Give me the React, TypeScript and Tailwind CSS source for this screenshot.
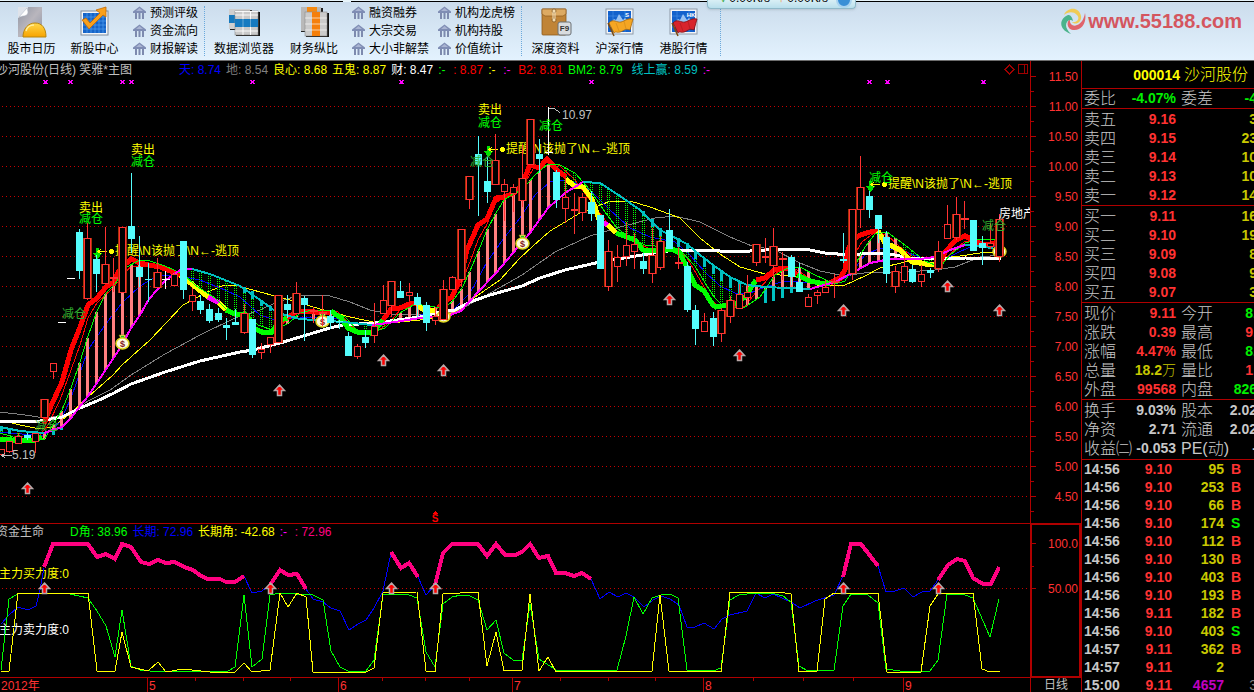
import type { ReactNode } from "react";

/* ---------- toolbar icons ---------- */

function CalendarIcon() {
  return (
    <svg viewBox="0 0 32 32" className="h-8 w-8">
      <defs>
        <linearGradient id="cal" x1="0" y1="0" x2="1" y2="1">
          <stop offset="0" stopColor="#8f95a3" />
          <stop offset="0.5" stopColor="#b9b6bd" />
          <stop offset="1" stopColor="#8b93a6" />
        </linearGradient>
        <linearGradient id="sun" x1="0" y1="0" x2="0" y2="1">
          <stop offset="0" stopColor="#ffd84a" />
          <stop offset="1" stopColor="#f7a300" />
        </linearGradient>
      </defs>
      <path d="M2 1h24v30H2z" fill="url(#cal)" />
      <path d="M2 1h10l-1 5c-1 3-3 4-5 4l-4 2z" fill="#dfe3ea" />
      <path d="M3 11L11 2l1 4c0 3-3 4-5 4z" fill="#ffffff" stroke="#aab2c0" strokeWidth="0.5" />
      <path d="M7 31c0-8 5-14 12-14s11 5 11 14z" fill="url(#sun)" stroke="#b8860f" />
      <path d="M10 25c1-4 4-6 8-6" fill="none" stroke="#ffef9e" strokeWidth="1.500" />
    </svg>
  );
}

function TrendIcon() {
  return (
    <svg viewBox="0 0 32 32" className="h-8 w-8">
      <rect x="2" y="5" width="27" height="24" fill="#f2f5f9" stroke="#7f8c9c" />
      <rect x="4" y="7" width="23" height="20" fill="#1564c8" />
      <path d="M8 7v20M12 7v20M16 7v20M20 7v20M24 7v20M4 11h23M4 15h23M4 19h23M4 23h23" stroke="#4f9df0" strokeWidth="0.7" />
      <path d="M3 14l4-2 4 5L21 7l-4-3 10-3 0 10-3-2-14 14z" fill="#f9a01b" stroke="#c26a05" strokeWidth="0.8" />
    </svg>
  );
}

function BrowserIcon() {
  return (
    <svg viewBox="0 0 32 32" className="h-8 w-8">
      <rect x="2" y="4" width="22" height="20" fill="#222" />
      <rect x="1" y="3" width="21" height="20" fill="#cfcfcf" />
      <rect x="1" y="9" width="21" height="8" fill="#1679bd" />
      <rect x="8" y="6" width="24" height="24" fill="#111" />
      <rect x="7" y="5" width="23" height="24" fill="#c9c9c9" stroke="#8a8a8a" strokeWidth="0.6" />
      <rect x="7" y="13" width="23" height="8" fill="#157ac0" />
      <path d="M15 13v8M22.500 13v8" stroke="#7fb6db" strokeWidth="0.8" />
      <path d="M15 5v8M22.500 5v8M15 21v8M22.500 21v8M7 9h23M7 25h23M7 5.500h23" stroke="#fff" strokeWidth="0.9" />
    </svg>
  );
}

function CompareIcon() {
  return (
    <svg viewBox="0 0 32 32" className="h-8 w-8">
      <rect x="3" y="2" width="22" height="24" fill="#222" />
      <rect x="3" y="1" width="20" height="24" fill="#b9b9b9" />
      <rect x="9" y="1" width="10" height="6" fill="#f58a12" />
      <rect x="8" y="7" width="23" height="24" fill="#111" />
      <rect x="7" y="6" width="22" height="24" fill="#cbcbcb" stroke="#8a8a8a" strokeWidth="0.6" />
      <rect x="14" y="6" width="8" height="24" fill="#f57f0b" />
      <path d="M7 12h22M7 18h22M7 24h22" stroke="#fff" strokeWidth="0.9" opacity="0.7" />
    </svg>
  );
}

function ArchiveIcon() {
  return (
    <svg viewBox="0 0 32 32" className="h-8 w-8">
      <rect x="2" y="3" width="24" height="26" rx="1" fill="#c08437" stroke="#8d5a1d" strokeWidth="0.8" />
      <path d="M2 3h24v5l-3 2H5L2 8z" fill="#ddaa62" stroke="#8d5a1d" strokeWidth="0.7" />
      <circle cx="14" cy="5" r="2" fill="#f4dcae" stroke="#7a4f19" strokeWidth="0.7" />
      <circle cx="14" cy="14" r="2" fill="#f4dcae" stroke="#7a4f19" strokeWidth="0.7" />
      <path d="M13 6v7M15 6v7" stroke="#f1e0bd" />
      <rect x="18" y="16" width="13" height="13" rx="2" fill="#d9dcdf" stroke="#6b7075" />
      <text x="24.500" y="25" fontSize="8" fontWeight="700" textAnchor="middle" fill="#333">F9</text>
    </svg>
  );
}

function MarketIcon({ flag, edge, tag }: { flag: string; edge: string; tag: string }) {
  return (
    <svg viewBox="0 0 32 32" className="h-8 w-8">
      <rect x="2" y="3" width="27" height="25" fill="#f2f5f9" stroke="#8d99a8" />
      <rect x="4" y="5" width="23" height="21" fill="#1261cc" />
      <path d="M4 10h23M4 21h23M9 5v21M21 5v21" stroke="#4c92e6" strokeWidth="0.6" />
      <path d="M6 18l4-5 2 1 3-6 4 6 2-2 5 5v4H6z" fill="#a9cdf5" opacity="0.9" />
      <text x="23" y="11" fontSize="6" fontWeight="700" textAnchor="middle" fill="#fff">{tag}</text>
      <path d="M5 17c4-5 8 0 12-1s6-4 12-3l-3 11c-5-2-6 1-10 2s-4-1-6 1z" fill={flag} stroke={edge} strokeWidth="0.8" />
      <path d="M12 17l3 8M20 15l2 8" stroke={edge} strokeWidth="0.600" opacity="0.5" />
      <path d="M4 17l6 13" stroke="#7b4a12" strokeWidth="1.500" />
    </svg>
  );
}

function BankIcon() {
  return (
    <svg viewBox="0 0 13 14" className="h-[14px] w-[13px] shrink-0">
      <path d="M6.500 0.500L13 5.500v1.500H0V5.500z" fill="#7f8db4" />
      <path d="M6.500 2L10 5H3z" fill="#a9b4d2" />
      <path d="M2 7h2v6H2zM5.500 7h2v6h-2zM9 7h2v6H9z" fill="#7d8aae" />
    </svg>
  );
}

/* ---------- toolbar ---------- */

function BigButton({ icon, label, wide }: { icon: ReactNode; label: string; wide?: boolean }) {
  return (
    <button className={`flex shrink-0 flex-col items-center pt-1 ${wide ? "w-[70px]" : "w-[63px]"}`}>
      {icon}
      <span className="mt-[3px] text-xs leading-4 whitespace-nowrap">{label}</span>
    </button>
  );
}

function LinkColumn({ items }: { items: string[] }) {
  return (
    <div className="flex shrink-0 flex-col pt-[2px]">
      {items.map((t) => (
        <button key={t} className="flex h-[18px] items-center gap-1 text-xs leading-[18px] whitespace-nowrap">
          <BankIcon />
          {t}
        </button>
      ))}
    </div>
  );
}

function Divider() {
  return <div className="my-1 w-px shrink-0 border-l border-dotted border-[#6aa9dc]" />;
}

function Logo() {
  return (
    <a href="#home" className="mt-[5px] mr-3 ml-auto flex h-7 shrink-0 items-center gap-[2px]">
      <svg viewBox="0 0 26 28" className="h-7 w-[26px]">
        <path d="M4 8C7 0 19-1 21 9c1 6-5 10-9 6 6 1 8-4 5-7C13 4 8 5 4 8z" fill="#f0cb55" />
        <path d="M25 6c2 9-3 18-12 17-6-1-7-8-3-11-1 5 3 8 7 6 4-1 7-6 8-12z" fill="#e0646c" />
        <path d="M8 8C0 11-3 22 11 27c-5-5-6-9-4-12 1-2 4-3 6-1-1-5-3-6-5-6z" fill="#4bb38c" />
      </svg>
      <span className="text-xl leading-7 font-bold text-[#d4565f]">www.55188.com</span>
    </a>
  );
}

function Toolbar() {
  return (
    <header className="relative border-b border-[#6d6d6d] bg-[#e6f3f9] text-black">
      <div className="flex h-[2px]">
        <div className="w-[343px] border-b border-black" />
        <div className="w-2" />
        <div className="flex-1 border-b border-black" />
      </div>
      <div className="flex h-[58px] bg-linear-to-b from-[#cbdcec] to-[#e3f2fe]">
        <BigButton icon={<CalendarIcon />} label="股市日历" />
        <BigButton icon={<TrendIcon />} label="新股中心" />
        <div className="w-[7px] shrink-0" />
        <LinkColumn items={["预测评级", "资金流向", "财报解读"]} />
        <div className="w-[6px] shrink-0" />
        <Divider />
        <div className="w-1 shrink-0" />
        <BigButton wide icon={<BrowserIcon />} label="数据浏览器" />
        <BigButton wide icon={<CompareIcon />} label="财务纵比" />
        <div className="w-[3px] shrink-0" />
        <LinkColumn items={["融资融券", "大宗交易", "大小非解禁"]} />
        <div className="w-[9px] shrink-0" />
        <LinkColumn items={["机构龙虎榜", "机构持股", "价值统计"]} />
        <div className="w-[6px] shrink-0" />
        <Divider />
        <div className="flex shrink-0 gap-px px-[2px]">
          <BigButton icon={<ArchiveIcon />} label="深度资料" />
          <BigButton icon={<MarketIcon flag="#f5a623" edge="#a8680c" tag="S" />} label="沪深行情" />
          <BigButton icon={<MarketIcon flag="#d8242c" edge="#7d0d12" tag="HK" />} label="港股行情" />
        </div>
        <div className="w-[3px] shrink-0" />
        <Divider />
        <Logo />
      </div>
      {/* network speed widget peeking in from the top edge */}
      <div className="absolute top-0 left-[707px] flex h-[9px] w-[149px] items-end gap-2 overflow-hidden rounded-b border border-t-0 border-[#8fb9c9] bg-linear-to-b from-[#d9eff5] to-[#b9dfec] pl-3 shadow">
        <span className="h-5 text-xs leading-5"><i className="text-[#1fa01f]">↓</i> 0.00K/s</span>
        <span className="h-5 text-xs leading-5"><i className="text-[#f07a10]">↑</i> 0.00K/s</span>
        <span className="h-4 w-4 rounded-full border-2 border-[#a9d3f0] bg-[#3a8fd6]" />
      </div>
    </header>
  );
}

/* ---------- price chart ---------- */

const RED = "#ff3232";
const CYAN = "#54fcfc";
const AXIS = "#b00000";
const GREEN = "#00ff00";
const YELLOW = "#ffff00";

// x of the n-th bar
const barX = (i: number) => Math.floor(1 + 8.684 * i) + 0.5;

type Kind = "r" | "c" | "w";

// [index, kind, body top, body bottom, high, low]
const CANDLES: [number, Kind, number, number, number, number][] = [
  [0, "r", 449, 454, 449, 454], [1, "r", 441, 451, 441, 453], [2, "r", 436, 443, 433, 443],
  [3, "c", 435, 438, 433, 440], [4, "r", 433, 441, 433, 453], [5, "r", 399, 417, 399, 417],
  [6, "r", 363, 371, 363, 379], [7, "w", 322, 323, 322, 322], [8, "w", 278, 279, 278, 278],
  [9, "c", 232, 271, 229, 279], [10, "r", 238, 298, 223, 300], [11, "c", 259, 274, 255, 292],
  [12, "r", 264, 283, 227, 283], [13, "r", 277, 279, 258, 292], [14, "r", 227, 292, 227, 292],
  [15, "c", 226, 239, 173, 253], [16, "c", 267, 277, 236, 287], [17, "c", 279, 280, 263, 302],
  [18, "r", 272, 287, 258, 287], [19, "w", 279, 280, 271, 289], [20, "r", 274, 285, 272, 285],
  [21, "c", 241, 290, 241, 299], [22, "r", 295, 301, 288, 311], [23, "c", 301, 310, 295, 314],
  [24, "c", 309, 321, 304, 323], [25, "c", 313, 320, 308, 322], [26, "c", 325, 328, 318, 340],
  [27, "c", 322, 325, 309, 325], [28, "r", 313, 332, 304, 334], [29, "c", 319, 355, 319, 358],
  [30, "r", 349, 352, 343, 359], [31, "r", 337, 344, 337, 353], [32, "r", 295, 342, 295, 342],
  [33, "c", 304, 310, 295, 318], [34, "r", 293, 313, 282, 313], [35, "c", 298, 305, 296, 341],
  [36, "r", 310, 312, 307, 323], [37, "r", 312, 314, 295, 326], [38, "c", 316, 323, 310, 329],
  [39, "c", 321, 322, 320, 329], [40, "c", 336, 356, 332, 356], [41, "r", 346, 356, 344, 359],
  [42, "c", 337, 343, 330, 348], [43, "r", 326, 335, 303, 343], [44, "r", 300, 313, 285, 313],
  [45, "r", 281, 305, 281, 317], [46, "c", 291, 298, 281, 298], [47, "r", 292, 295, 283, 301],
  [48, "c", 297, 305, 293, 317], [49, "c", 305, 323, 302, 331], [50, "r", 316, 320, 307, 325],
  [51, "r", 289, 319, 280, 319], [52, "r", 277, 289, 276, 289], [53, "r", 229, 279, 229, 287],
  [54, "r", 176, 199, 176, 209], [55, "c", 154, 165, 136, 216], [56, "c", 181, 192, 157, 203],
  [57, "r", 160, 184, 134, 184], [58, "r", 184, 191, 179, 221], [59, "r", 187, 193, 184, 212],
  [60, "r", 178, 200, 145, 207], [61, "r", 119, 164, 119, 164], [62, "c", 154, 159, 139, 173],
  [63, "w", 152, 153, 107, 155], [64, "c", 172, 200, 170, 208], [65, "r", 197, 208, 178, 223],
  [66, "r", 209, 211, 193, 234], [67, "r", 197, 212, 193, 221], [68, "c", 202, 214, 191, 221],
  [69, "c", 215, 269, 215, 269], [70, "r", 251, 286, 240, 291], [71, "r", 257, 266, 245, 282],
  [72, "r", 245, 256, 222, 266], [73, "r", 244, 251, 233, 269], [74, "c", 261, 269, 253, 274],
  [75, "r", 255, 273, 228, 283], [76, "r", 241, 267, 236, 270], [77, "c", 230, 249, 209, 249],
  [78, "r", 262, 264, 247, 269], [79, "c", 266, 310, 262, 312], [80, "c", 310, 329, 305, 345],
  [81, "r", 321, 331, 313, 331], [82, "c", 318, 337, 312, 346], [83, "r", 310, 333, 308, 342],
  [84, "r", 300, 316, 296, 323], [85, "r", 294, 308, 284, 308], [86, "r", 292, 297, 275, 306],
  [87, "r", 244, 262, 244, 266], [88, "r", 256, 258, 238, 263], [89, "r", 246, 265, 228, 280],
  [90, "r", 258, 260, 252, 280], [91, "c", 257, 277, 255, 285], [92, "c", 282, 292, 263, 292],
  [93, "r", 297, 306, 294, 306], [94, "r", 292, 295, 290, 304], [95, "r", 287, 292, 280, 292],
  [96, "r", 281, 283, 274, 298], [97, "c", 259, 261, 233, 263], [98, "r", 209, 273, 209, 280],
  [99, "r", 187, 209, 156, 228], [100, "c", 196, 210, 191, 218], [101, "c", 215, 229, 215, 243],
  [102, "c", 237, 274, 231, 283], [103, "r", 271, 286, 266, 293], [104, "r", 266, 280, 255, 283],
  [105, "c", 269, 282, 265, 283], [106, "r", 274, 281, 265, 287], [107, "c", 270, 273, 268, 278],
  [108, "r", 251, 268, 241, 272], [109, "r", 224, 238, 205, 238], [110, "r", 214, 237, 197, 240],
  [111, "r", 218, 220, 201, 229], [112, "c", 220, 251, 220, 251], [113, "c", 243, 248, 236, 265],
  [114, "r", 243, 246, 223, 249], [115, "r", 219, 256, 214, 262],
];

interface Line {
  color: string;
  points: string;
}

const SLOW: Line[] = [
  { color: "#00c0c0", points: "0,427 20,431 44,433" },
  { color: "#ff00ff", points: "44,433 62,427 71,418 88,396 105,371 122,345 131,328 140,315 149,299 166,280 180,270 192,269" },
  { color: "#00c0c0", points: "192,269 210,274 240,286 260,300 278,313 300,319 343,322 372,325" },
  { color: "#ff00ff", points: "372,325 395,322 420,318 450,315 461,311 478,292 496,273 513,253 530,233 548,208 565,193 583,182" },
  { color: "#00c0c0", points: "583,182 600,183 620,196 640,210 660,230 687,244 695,251 713,265 730,277 747,285 765,287 810,289" },
  { color: "#ff00ff", points: "810,289 835,282 852,273 870,263 890,259 920,259 935,257 950,250 965,245" },
  { color: "#00c0c0", points: "965,245 985,247 1001,250" },
];

const FAST: Line[] = [
  { color: GREEN, points: "0,439 12,440 35,440 42,437" },
  { color: "#ff0000", points: "44,424 50,408 62,382 71,350 80,327 88,305 97,298 106,287 114,282 117,274 122,267 131,259 140,263 149,265 160,267 175,273 180,275" },
  { color: YELLOW, points: "180,275 193,285 208,297" },
  { color: "#ff00ff", points: "208,297 219,303" },
  { color: YELLOW, points: "219,303 226,310" },
  { color: GREEN, points: "226,310 235,314 247,315 253,328 262,332 272,332 280,320 288,318" },
  { color: "#ff0000", points: "287,318 296,312 305,311 315,312 331,313" },
  { color: GREEN, points: "331,311 341,318 348,328 357,332 370,333 375,330 383,320" },
  { color: "#ff0000", points: "383,320 391,309 400,308 409,304 417,303" },
  { color: YELLOW, points: "417,303 422,309 436,311" },
  { color: "#ff0000", points: "438,308 444,302 452,297 461,275 467,250 478,225 487,219 496,198 504,197 514,193 522,185 530,165 539,168 547,159 557,170 566,177" },
  { color: YELLOW, points: "566,179 574,186 583,187 592,199 600,222" },
  { color: "#ff00ff", points: "600,222 608,225" },
  { color: YELLOW, points: "608,225 616,233" },
  { color: GREEN, points: "616,233 635,240 643,250 660,251 672,249 680,253 687,268 695,285 704,291 713,305 716,307 722,306 730,305 739,302 747,295 752,286 756,280" },
  { color: "#ff0000", points: "756,280 765,278 774,270 783,268 791,269 797,275" },
  { color: GREEN, points: "797,275 810,281 820,283 830,284" },
  { color: "#ff0000", points: "830,283 840,278 845,270 848,250 853,240 860,235 870,232 878,231" },
  { color: YELLOW, points: "878,231 885,243 890,245 900,250 912,262 932,265 940,262" },
  { color: "#ff0000", points: "940,262 945,252 956,240 965,236 975,241 985,245 995,243 1001,238" },
];

const WHITE_LINE =
  "0,421 40,421 62,417 80,408 97,401 114,393 131,384 165,372 200,361 240,352 253,350 280,343 300,337 330,328 343,325 375,323 420,317 440,312 455,310 470,302 490,295 522,286 540,278 565,270 600,262 630,257 660,252 675,250 720,251 750,251 780,249 805,249 825,253 850,255 870,253 890,254 910,258 935,259 965,258 1001,259";

const GREEN_THIN =
  "0,433 20,439 44,440 53,425 62,410 71,388 80,362 88,336 97,311 106,293 115,284 125,268 140,260 150,261 165,266 183,274 195,285 215,298 228,311 245,313 258,325 275,331 290,322 300,313 312,310 330,310 345,317 357,330 370,333 385,328 400,313 415,304 435,307 445,307 452,302 461,290 470,271 478,252 487,230 496,213 504,200 513,194 522,190 535,175 548,164 558,164 575,173 590,190 605,212 617,228 630,238 645,245 665,247 680,250 695,266 705,283 715,298 725,308 745,307 760,297 775,275 790,267 800,267 815,275 835,284 845,281 855,265 865,247 875,234 887,232 905,245 925,261 940,267 950,255 965,243 980,239 1001,240";

const THIN_LINES: Line[] = [
  { color: "#808080", points: "0,412 25,415 45,418 70,414 88,401 110,390 131,375 165,354 200,335 235,318 260,310 275,303 300,295 330,296 350,302 370,310 390,314 430,315 455,312 478,300 522,275 555,252 590,236 620,227 655,218 675,216 700,222 730,237 752,246 775,250 800,263 820,271 845,276 870,272 905,272 935,270 955,267 980,257 1001,255" },
  { color: YELLOW, points: "0,420 20,425 40,429 53,427 71,413 88,397 113,375 122,365 150,340 183,305 205,293 222,286 235,285 260,292 290,300 320,309 350,317 378,323 400,322 430,319 455,312 478,295 500,280 520,258 533,246 550,231 580,213 608,202 630,201 650,207 680,218 700,238 720,254 740,267 765,274 795,276 820,286 845,285 865,276 880,268 905,262 940,258 960,256 980,253 1001,252" },
  { color: "#0000ff", points: "0,432 44,436 60,422 71,398 88,350 105,325 122,303 140,286 157,276 175,275 200,280 225,290 240,297 260,315 275,320 300,318 330,317 350,322 375,326 400,320 425,314 445,312 455,308 470,293 487,262 504,238 520,218 535,195 550,182 570,180 590,190 610,210 630,228 650,237 675,242 690,255 705,272 720,286 735,293 750,293 765,287 785,281 810,283 835,284 850,275 865,255 880,248 900,250 920,257 940,261 955,254 970,247 985,246 1001,246" },
  { color: "#ff0000", points: "0,437 35,441 48,425 60,400 71,370 80,345 88,318 97,303 113,288 131,266 150,267 180,272 200,290 215,301 228,312 245,316 258,329 272,333 287,320 300,311 320,310 338,312 350,325 362,333 375,333 390,322 400,310 417,304 435,309 445,305 452,298 461,284 470,262 478,240 487,224 496,203 504,197 513,194 522,188 533,169 548,161 560,166 575,180 590,200 605,220 617,232 635,242 650,249 675,248 687,258 700,280 713,302 722,308 745,306 757,291 770,277 785,268 797,270 812,280 832,284 842,280 852,258 862,242 875,232 887,235 900,247 920,262 937,268 948,256 965,241 980,242 1001,242" },
];

const parse = (s: string) => s.split(" ").map((p) => p.split(",").map(Number));
const FAST_PTS = parse(GREEN_THIN);
const SLOW_PTS = SLOW.flatMap((l) => parse(l.points));

function valueAt(pts: number[][], x: number) {
  for (let k = 1; k < pts.length; k++) {
    const [x0, y0] = pts[k - 1];
    const [x1, y1] = pts[k];
    if (x <= x1 && x1 > x0) return Math.round(y0 + ((y1 - y0) * (x - x0)) / (x1 - x0));
  }
  return pts[pts.length - 1][1];
}

const range = (a: number, b: number) => Array.from({ length: b - a + 1 }, (_, k) => a + k);

const RISING = [...range(5, 16), 33, 34, 36, 37, 38, 46, 47, 48, 50, ...range(52, 63), ...range(86, 93), ...range(99, 103), 110];
const FALLING = [0, 1, 2, ...range(21, 31), 39, 42, 43, 44, ...range(64, 85), ...range(104, 108)];

// [index, top, bottom] of the teal stubs hanging from the slow line
const STUBS = [
  [0, 427, 431], [1, 430, 434], [6, 430, 435], [7, 425, 430], [28, 287, 293], [29, 291, 299], [30, 300, 306], [31, 306, 311],
  [74, 211, 216], [75, 219, 227], [76, 228, 236], [78, 238, 247], [79, 243, 251], [80, 250, 259],
  [81, 259, 267], [82, 265, 274], [83, 272, 281], [84, 277, 288], [85, 282, 293],
  [88, 287, 303], [89, 288, 301], [90, 289, 298], [91, 288, 293],
];

// [x, baseline, text, color]
const NOTES: [number, number, string, string][] = [
  [79, 212, "卖出", YELLOW], [79, 223, "减仓", GREEN],
  [131, 154, "卖出", YELLOW], [131, 166, "减仓", GREEN],
  [478, 114, "卖出", YELLOW], [478, 127, "减仓", GREEN],
  [539, 130, "减仓", GREEN], [869, 182, "减仓", GREEN],
  [62, 318, "减仓", "#30b030"], [35, 430, "减仓", "#30b030"],
  [470, 166, "减仓", "#30b030"], [982, 230, "减仓", "#30b030"],
  [562, 119, "10.97", "#c0c0c0"], [12, 459, "5.19", "#c0c0c0"],
];

const WARNINGS = [[97, 251], [488, 149], [870, 184]];
const BUY_ARROWS = [[27, 483], [279, 385], [383, 355], [443, 365], [669, 294], [739, 350], [843, 305], [947, 281], [999, 305]];
const BAGS = [[122, 342], [322, 320], [443, 315], [522, 242], [999, 250]];
const MARKS: [number, boolean][] = [[45, true], [70, false], [122, false], [131, false], [252, false], [401, true], [591, false], [869, false], [887, true], [983, true]];

function UpArrow({ x, y }: { x: number; y: number }) {
  return (
    <path
      d={`M${x + 0.5} ${y}l5 5.500h-3v5h-4v-5h-3z`}
      fill="#ff0000"
      stroke="#b8a8a8"
      strokeWidth="1.500"
      shapeRendering="auto"
    />
  );
}

function DownArrow({ x, y }: { x: number; y: number }) {
  return <path d={`M${x - 1} ${y}h3v5h3.500l-5 6-5-6h3.500z`} fill="#00e000" />;
}

function MoneyBag({ x, y }: { x: number; y: number }) {
  return (
    <g shapeRendering="auto">
      <path d={`M${x - 3} ${y - 7}h7l-2 4h-3z`} fill="#f0f060" stroke="#808000" strokeWidth="0.600" />
      <rect x={x - 1} y={y - 6} width="3" height="2" fill="#20c020" />
      <ellipse cx={x + 0.5} cy={y + 1.5} rx="6.500" ry="5.500" fill="#fffbe0" stroke="#e0d820" strokeWidth="1.500" />
      <text x={x + 0.5} y={y + 5} fontSize="9" fontWeight="700" textAnchor="middle" fill="#802020">$</text>
    </g>
  );
}

function Candle({ c }: { c: (typeof CANDLES)[number] }) {
  const [i, kind, top, bottom, high, low] = c;
  const x = barX(i);
  if (kind === "c") {
    return (
      <g stroke={CYAN} fill={CYAN}>
        <path d={`M${x} ${high}V${low}`} />
        <rect x={x - 3.5} y={top} width="7" height={Math.max(bottom - top, 1)} stroke="none" />
      </g>
    );
  }
  const stroke = kind === "w" ? "#ffffff" : RED;
  if (bottom - top <= 2) {
    return (
      <g stroke={stroke}>
        <path d={`M${x} ${high}V${low}`} />
        <path d={`M${x - 4} ${top + 0.5}h8`} strokeWidth={bottom - top} />
      </g>
    );
  }
  return (
    <g stroke={stroke}>
      <path d={`M${x} ${high}V${low}`} />
      {bottom - top > 14 && <path d={`M${x - 4} ${top}V${bottom + 1}M${x + 4} ${top}V${bottom + 1}`} stroke="#a83208" />}
      <rect x={x - 3} y={top + 0.5} width="6" height={bottom - top} fill="#000" />
    </g>
  );
}

function PriceChart() {
  const gridY = range(0, 13).map((k) => 106.5 + k * 30);
  return (
    <svg viewBox="0 61 1081 462" className="block h-auto w-full" fontSize="12" shapeRendering="crispEdges">
      {gridY.map((y) => (
        <path key={y} d={`M2 ${y}H1030`} stroke="#c80000" strokeDasharray="1 3" />
      ))}

      {MARKS.map(([x, bold]) => (
        <g key={x} stroke="#ff00ff">
          <path d={`M${x - 1.5} 80l4 4M${x + 2.5} 80l-4 4`} />
          {bold && <rect x={x - 1} y="81" width="3" height="3" fill="#ff00ff" stroke="none" />}
        </g>
      ))}

      <g fill="none">
        {THIN_LINES.map((l) => (
          <polyline key={l.color} points={l.points} stroke={l.color} />
        ))}
      </g>

      {FALLING.map((i) => {
        const x = barX(i);
        const a = valueAt(SLOW_PTS, x);
        const b = valueAt(FAST_PTS, x);
        return (
          <path
            key={i}
            d={`M${x - 1} ${Math.min(a, b)}V${Math.max(a, b)}M${x + 1} ${Math.min(a, b)}V${Math.max(a, b)}`}
            stroke={GREEN}
            strokeDasharray="1 1"
          />
        );
      })}
      {STUBS.map(([i, a, b]) => (
        <path key={i} d={`M${barX(i)} ${a}V${b}`} stroke="#00c0c0" strokeWidth="3" />
      ))}
      {RISING.map((i) => {
        const x = barX(i);
        return <path key={i} d={`M${x} ${valueAt(FAST_PTS, x)}V${valueAt(SLOW_PTS, x)}`} stroke="#ff8080" strokeWidth="3" />;
      })}

      <g fill="none">
        <polyline points={WHITE_LINE} stroke="#ffffff" strokeWidth="3" />
        {FAST.map((l) => (
          <polyline key={l.points} points={l.points} stroke={l.color} strokeWidth="5" />
        ))}
        <polyline points={GREEN_THIN} stroke={GREEN} />
        {SLOW.map((l) => (
          <polyline key={l.points} points={l.points} stroke={l.color} strokeWidth="2" />
        ))}
      </g>

      {WARNINGS.map(([x, y]) => (
        <g key={x} fill={YELLOW}>
          <DownArrow x={x} y={y - 3} />
          <path d={`M${x + 1} ${y + 0.5}h9M${x + 4} ${y - 2}l-3 2.500l3 2.500`} fill="none" stroke={YELLOW} />
          <circle cx={x + 14.5} cy={y + 0.5} r="2.500" />
          <text x={x + 18} y={y + 4}>{"提醒\\N该抛了\\N←-逃顶"}</text>
        </g>
      ))}
      {BAGS.map(([x, y]) => (
        <MoneyBag key={x} x={x} y={y} />
      ))}
      {CANDLES.map((c) => (
        <Candle key={c[0]} c={c} />
      ))}
      {NOTES.map(([x, y, text, color]) => (
        <text key={`${x}-${y}`} x={x} y={y} fill={color}>{text}</text>
      ))}
      <path d="M549 108.500h5l6 4M2 455.500h10M5 453l-3 2.500l3 2.500" stroke="#c0c0c0" fill="none" />
      {BUY_ARROWS.map(([x, y]) => (
        <UpArrow key={x} x={x} y={y} />
      ))}
      <path d="M432 514l3-3 3 3z" fill="#ff0000" />
      <text x="435" y="522" fontSize="10" fontWeight="700" textAnchor="middle" fill="#ff0000">S</text>
      <svg x="999" y="200" width="31" height="24">
        <text x="0" y="18" fill="#ffffff">房地产</text>
      </svg>

      {/* corner controls */}
      <path d="M1009.500 65l4.500 4.500l-4.500 4.500l-4.500-4.500zM1018.500 64.500h9v9h-9zM1024.500 65v9" stroke="#a00000" fill="none" />

      {/* price axis */}
      <path d="M1030.500 61V523" stroke={AXIS} />
      {range(0, 29).map((k) => (
        <path key={k} d={`M1031 ${76.5 + k * 15}h${k % 2 ? 3 : 5}`} stroke={AXIS} />
      ))}
      {range(0, 14).map((k) => (
        <text key={k} x="1078" y={81 + k * 30} textAnchor="end" fill={RED}>
          {(11.5 - k * 0.5).toFixed(2)}
        </text>
      ))}
    </svg>
  );
}

/* ---------- lower indicator ---------- */

const LIFE_LINES = [
  "44,567 53,544 88,544 97,557 106,554 115,559 122,544 131,547 141,562 149,564 158,560 166,563 175,562 184,567 193,570 201,576 208,579 220,579 226,582 235,582 244,576",
  "270,585 280,570 288,575 297,574 306,589",
  "391,552 401,568 409,563 418,577",
  "435,585 443,553 452,544 478,544 487,556 496,544 505,555 515,555 522,552 530,544 539,558 548,556 556,573 565,573 574,576 582,573 591,579",
  "843,577 851,544 861,544 878,566",
  "938,580 948,565 957,559 965,561 973,578 983,584 991,584 999,567",
];

const LONG_LINES = [
  "1,624 9,615 18,607 28,610 36,606 40,590 44,568",
  "244,576 252,593 262,591 270,585",
  "306,589 313,599 323,602 331,608 340,611 349,630 358,624 366,620 374,608 383,591 391,553",
  "418,577 426,595 435,585",
  "591,579 600,599 609,592 618,597 626,593 634,597 644,607 653,600 661,596 670,599 679,605 687,627 695,627 704,623 714,629 722,619 730,615 747,611 756,593 765,598 773,594 782,598 791,602 800,608 815,601 834,595 843,576",
  "878,566 886,592 895,591 904,588 913,597 922,592 930,591 938,580",
];

const D_ANGLE =
  "1,670 9,599 18,594 44,593 70,594 88,598 97,611 106,626 115,657 122,610 131,666 140,670 150,671 228,671 235,667 244,595 252,667 262,659 270,595 280,593 313,595 323,600 331,651 340,667 348,671 366,671 374,660 383,595 391,594 409,595 417,598 426,652 435,667 443,604 452,597 461,595 470,596 478,600 487,630 496,620 504,653 513,660 522,660 530,604 539,659 556,670 565,671 617,670 626,636 634,597 643,614 652,598 661,595 670,594 678,598 687,670 713,671 721,668 730,600 739,595 755,593 775,594 783,596 791,602 799,666 808,671 834,670 843,606 851,594 868,595 878,603 886,669 900,671 930,671 938,660 947,594 965,595 973,598 990,637 999,599";

const LONG_ANGLE =
  "1,672 9,671 18,593 88,593 97,671 115,671 122,632 131,667 148,671 158,662 166,672 183,669 210,672 235,672 244,663 252,672 270,670 280,593 288,607 297,593 306,597 313,672 366,672 374,668 383,593 417,592 426,671 435,672 443,594 478,592 487,666 496,632 504,671 522,670 530,594 539,671 548,657 556,672 575,671 652,671 660,595 669,671 721,672 730,592 778,592 791,594 799,672 817,671 825,599 834,593 878,593 887,672 921,672 930,606 938,594 947,593 973,593 982,669 990,672 1000,671";

const MONTHS: [number, string][] = [[147, "5"], [338, "6"], [512, "7"], [703, "8"], [903, "9"]];
const WEEKS = [195, 243, 290, 382, 425, 469, 560, 608, 655, 753, 803, 853];

function LifeChart() {
  return (
    <svg viewBox="0 523 1081 169" className="block h-auto w-full" fontSize="12" shapeRendering="crispEdges">
      <path d="M0 523.500H1031M0 677.500H1081" stroke={AXIS} />
      <path d="M2 588.500H1030" stroke="#c80000" strokeDasharray="1 3" />
      <text x="-1" y="578" fill={YELLOW}>主力买力度:0</text>
      <text x="-1" y="634" fill="#ffffff">主力卖力度:0</text>
      <g fill="none">
        {LONG_LINES.map((p) => (
          <polyline key={p} points={p} stroke="#0000ff" />
        ))}
        <polyline points={D_ANGLE} stroke={GREEN} />
        <polyline points={LONG_ANGLE} stroke={YELLOW} />
        {LIFE_LINES.map((p) => (
          <polyline key={p} points={p} stroke="#ff0080" strokeWidth="4" />
        ))}
      </g>
      {[44, 270, 391, 435, 843, 938].map((x) => (
        <UpArrow key={x} x={x} y={583} />
      ))}

      <rect x="1031" y="524" width="49" height="153" fill="none" stroke={AXIS} strokeWidth="2" />
      <path d="M1032 543.500h4M1032 566.500h2M1032 588.500h4M1030.500 677V692" stroke={AXIS} />
      <text x="1078" y="548" textAnchor="end" fill={RED}>100.0</text>
      <text x="1078" y="593" textAnchor="end" fill={RED}>50.00</text>

      <text x="1" y="690" fill={RED}>2012年</text>
      {MONTHS.map(([x, label]) => (
        <g key={label}>
          <path d={`M${x + 0.5} 678v14`} stroke={AXIS} />
          <text x={x + 2} y="690" fill={RED}>{label}</text>
        </g>
      ))}
      {WEEKS.map((x) => (
        <path key={x} d={`M${x + 0.5} 678v3`} stroke={AXIS} />
      ))}
      <text x="1044" y="689" fill="#c0c0c0">日线</text>
    </svg>
  );
}

/* ---------- right panel ---------- */

const SELLS = [["卖五", "9.16", "3"], ["卖四", "9.15", "23"], ["卖三", "9.14", "10"], ["卖二", "9.13", "10"], ["卖一", "9.12", "14"]];
const BUYS = [["买一", "9.11", "16"], ["买二", "9.10", "19"], ["买三", "9.09", "8"], ["买四", "9.08", "9"], ["买五", "9.07", "3"]];

const R = "text-[#ff3232]";
const G = "text-[#00f000]";
const Y = "text-[#c8c800]";
const W = "text-[#c8c8c8]";

const TICKS = [
  ["14:56", "9.10", "95", "B"], ["14:56", "9.10", "253", "B"], ["14:56", "9.10", "66", "B"],
  ["14:56", "9.10", "174", "S"], ["14:56", "9.10", "112", "B"], ["14:56", "9.10", "130", "B"],
  ["14:56", "9.10", "403", "B"], ["14:56", "9.10", "193", "B"], ["14:56", "9.11", "182", "B"],
  ["14:56", "9.10", "403", "S"], ["14:57", "9.11", "362", "B"], ["14:57", "9.11", "2", ""],
  ["15:00", "9.11", "4657", ""],
];

interface Cell {
  label: string;
  value: ReactNode;
  color: string;
}

function QuoteTable({ rows, pad = "pt-px" }: { rows: [Cell, Cell][]; pad?: string }) {
  return (
    <div className={`border-b border-[#b00000] ${pad}`}>
      <table className="w-[175px] table-fixed border-collapse whitespace-nowrap">
        <colgroup>
          <col className="w-[46px]" />
          <col className="w-12" />
          <col className="w-[47px]" />
          <col className="w-[34px]" />
        </colgroup>
        <tbody>
          {rows.map(([a, b]) => (
            <tr key={a.label} className="h-[19px] leading-[19px]">
              <th className="p-0 pl-[2px] text-left text-base leading-[19px] font-light text-[#c8c8c8]">{a.label}</th>
              <td className={`p-0 text-right text-sm leading-[19px] font-bold ${a.color}`}>{a.value}</td>
              <th className="p-0 pl-[5px] text-left text-base leading-[19px] font-light text-[#c8c8c8]">{b.label}</th>
              <td className={`p-0 text-right text-sm leading-[19px] font-bold ${b.color}`}>{b.value}</td>
            </tr>
          ))}
        </tbody>
      </table>
    </div>
  );
}

function toRows(levels: string[][]): [Cell, Cell][] {
  return levels.map(([label, price, volume]) => [
    { label, value: price, color: R },
    { label: "", value: volume, color: Y },
  ]);
}

function QuotePanel() {
  return (
    <aside className="w-[173px] shrink-0 overflow-hidden border-l border-[#b00000]">
      <h1 className="flex h-7 items-center justify-end gap-1 border-b border-[#b00000] pr-[6px] text-base whitespace-nowrap text-[#ffff00]">
        <span className="text-sm font-bold">000014</span>
        <span className="font-light">沙河股份</span>
      </h1>
      <QuoteTable
        pad="pt-0"
        rows={[[{ label: "委比", value: "-4.07%", color: G }, { label: "委差", value: "-4", color: G }]]}
      />
      <QuoteTable rows={toRows(SELLS)} />
      <QuoteTable rows={toRows(BUYS)} />
      <QuoteTable
        rows={[
          [{ label: "现价", value: "9.11", color: R }, { label: "今开", value: "8.", color: G }],
          [{ label: "涨跌", value: "0.39", color: R }, { label: "最高", value: "9.", color: R }],
          [{ label: "涨幅", value: "4.47%", color: R }, { label: "最低", value: "8.", color: G }],
          [
            { label: "总量", value: <>18.2<span className="font-light">万</span></>, color: Y },
            { label: "量比", value: "1.", color: R },
          ],
          [{ label: "外盘", value: "99568", color: R }, { label: "内盘", value: "826", color: G }],
        ]}
      />
      <QuoteTable
        pad="py-px"
        rows={[
          [{ label: "换手", value: "9.03%", color: W }, { label: "股本", value: "2.02", color: W }],
          [{ label: "净资", value: "2.71", color: W }, { label: "流通", value: "2.02", color: W }],
          [{ label: "收益㈡", value: "-0.053", color: W }, { label: "PE(动)", value: "-", color: W }],
        ]}
      />
      <table className="w-[175px] table-fixed border-collapse text-sm font-bold whitespace-nowrap">
        <colgroup>
          <col className="w-[38px]" />
          <col className="w-[52px]" />
          <col className="w-[52px]" />
          <col className="w-[18px]" />
          <col className="w-[15px]" />
        </colgroup>
        <tbody>
          {TICKS.map(([time, price, qty, side], k) => (
            <tr key={k} className="h-[18px] leading-[18px]">
              <td className="p-0 pl-[2px] text-[#c8c8c8]">{time}</td>
              <td className="p-0 text-right text-[#ff3232]">{price}</td>
              <td className={`p-0 text-right ${qty === "4657" ? "text-[#c000c0]" : "text-[#c8c800]"}`}>{qty}</td>
              <td className={`p-0 pl-[7px] ${side === "S" ? "text-[#00f000]" : "text-[#ff3232]"}`}>{side}</td>
              <td className="p-0 text-right font-normal text-[#808080]">{qty === "4657" ? "3" : ""}</td>
            </tr>
          ))}
        </tbody>
      </table>
    </aside>
  );
}

/* ---------- page ---------- */

export default function App() {
  return (
    <div className="flex h-screen flex-col overflow-hidden bg-black font-['Liberation_Sans','Noto_Sans_CJK_SC',sans-serif]">
      <Toolbar />
      <main className="flex min-h-0 flex-1">
        <div className="min-w-0 flex-1">
          <section className="relative">
            <PriceChart />
            <div className="absolute top-0 left-0 flex h-[18px] items-center gap-[5px] text-xs whitespace-nowrap">
              <span className="-ml-1 w-[178px] text-[#c0c0c0]">沙河股份(日线) 笑雅*主图</span>
              <span className="text-[#0000ff]">天: 8.74</span>
              <span className="text-[#808080]">地: 8.54</span>
              <span className="text-[#ffff00]">良心: 8.68</span>
              <span className="text-[#ffff00]">五鬼: 8.87</span>
              <span className="text-white">财: 8.47</span>
              <span className="w-[10px] text-[#00ff00]">:-</span>
              <span className="text-[#ff0000]">: 8.87</span>
              <span className="w-[10px] text-[#ffff00]">:-</span>
              <span className="w-[10px] text-[#ff00ff]">:-</span>
              <span className="text-[#ff0000]">B2: 8.81</span>
              <span className="text-[#00ff00]">BM2: 8.79</span>
              <span className="ml-1 text-[#00c0c0]">线上赢: 8.59</span>
              <span className="text-[#ff00ff]">:-</span>
            </div>
          </section>
          <section className="relative">
            <LifeChart />
            <div className="absolute top-0 left-0 flex h-[18px] items-center gap-[5px] text-xs whitespace-nowrap">
              <span className="-ml-1 w-[69px] text-[#c0c0c0]">资金生命</span>
              <span className="text-[#00ff00]">D角: 38.96</span>
              <span className="text-[#0000ff]">长期: 72.96</span>
              <span className="text-[#ffff00]">长期角: -42.68</span>
              <span className="w-[10px] text-[#ff00ff]">:-</span>
              <span className="text-[#ff0080]">: 72.96</span>
            </div>
          </section>
        </div>
        <QuotePanel />
      </main>
    </div>
  );
}
